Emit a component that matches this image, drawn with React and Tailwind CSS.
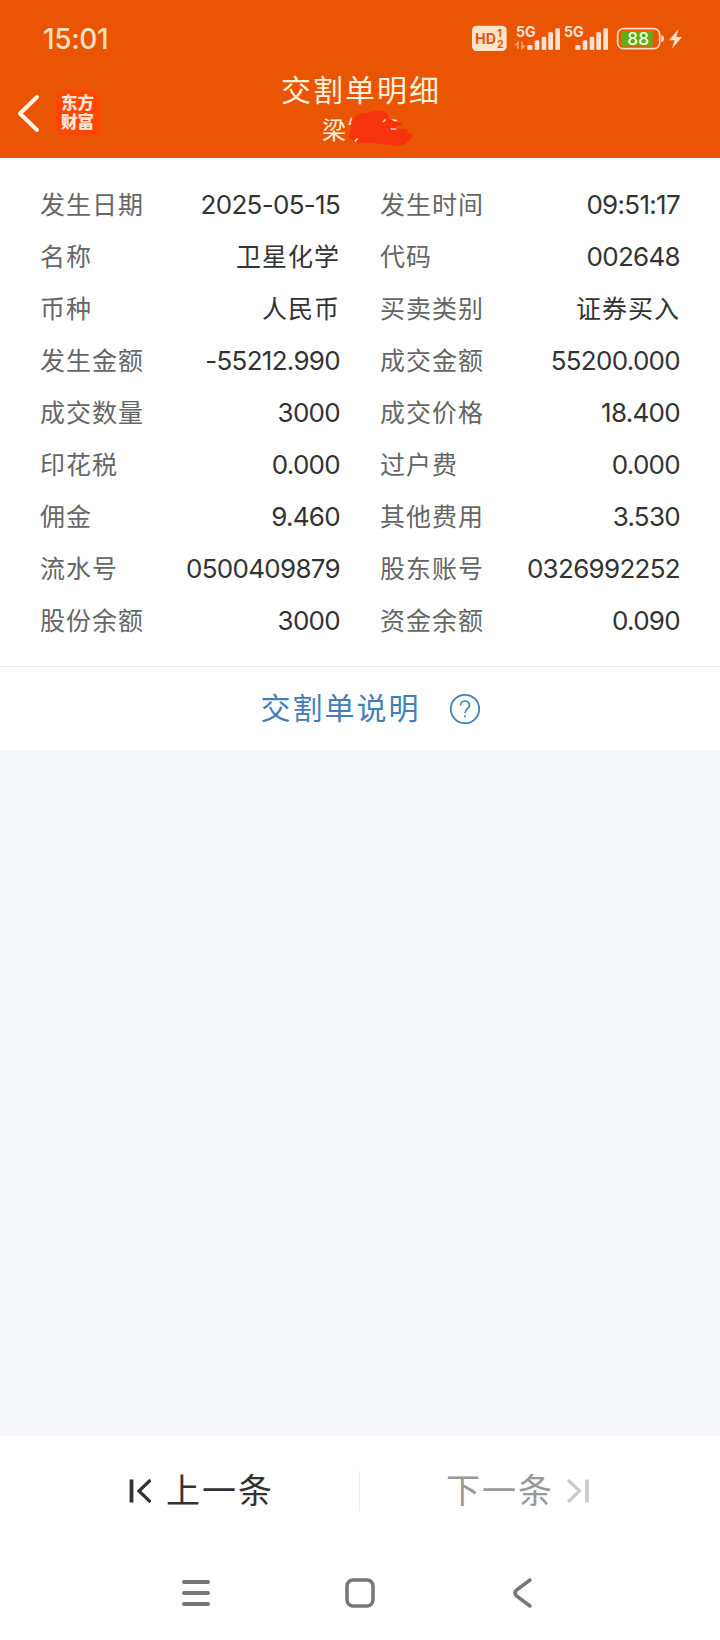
import React from "react";

const rows = [
  ["发生日期", "2025-05-15", "发生时间", "09:51:17"],
  ["名称", "卫星化学", "代码", "002648"],
  ["币种", "人民币", "买卖类别", "证券买入"],
  ["发生金额", "-55212.990", "成交金额", "55200.000"],
  ["成交数量", "3000", "成交价格", "18.400"],
  ["印花税", "0.000", "过户费", "0.000"],
  ["佣金", "9.460", "其他费用", "3.530"],
  ["流水号", "0500409879", "股东账号", "0326992252"],
  ["股份余额", "3000", "资金余额", "0.090"],
];

function StatusIcons() {
  return (
    <svg className="w-[240px] h-[60px]" viewBox="0 0 720 180" fill="#ffe3cc">
      <rect x="36" y="47" width="104" height="76" rx="14" />
      <g fill="#e95504" fontFamily="Inter, sans-serif" fontWeight="700">
        <text x="45" y="101" fontSize="43" textLength="63" lengthAdjust="spacingAndGlyphs">HD</text>
        <text x="112" y="82" fontSize="32">1</text>
        <text x="111" y="114" fontSize="32">2</text>
      </g>
      <g fontFamily="Inter, sans-serif" fontWeight="700" fontSize="44">
        <text x="168" y="82" textLength="59" lengthAdjust="spacingAndGlyphs">5G</text>
        <text x="312" y="82" textLength="59" lengthAdjust="spacingAndGlyphs">5G</text>
      </g>
      <path d="M174 116V97l-8 9M186 95v20l8-9" fill="none" stroke="#f7a470" strokeWidth="5" />
      {[202, 346].map((x) => (
        <g key={x}>
          <rect x={x} y="105" width="15" height="15" rx="4" />
          <rect x={x + 22} y="91" width="14" height="29" rx="4" />
          <rect x={x + 43} y="80" width="14" height="40" rx="4" />
          <rect x={x + 63} y="67" width="14" height="53" rx="4" />
          <rect x={x + 84} y="55" width="14" height="65" rx="4" />
        </g>
      ))}
      <rect x="473" y="56" width="126" height="60" rx="17" fill="none" stroke="#ffdcc0" strokeWidth="5" />
      <path d="M490 63h88v46h-88q-7 0-7-7V70q0-7 7-7z" fill="#5fae16" />
      <path d="M604 76q8 1 8 10t-8 10z" />
      <text x="502" y="105" fontSize="52" fontFamily="Inter, sans-serif" fontWeight="500" fill="#f8ffe0" textLength="65" lengthAdjust="spacingAndGlyphs">88</text>
      <path d="M656 57l-29 34h17l-9 26 31-36h-17z" />
    </svg>
  );
}

function Scribble() {
  return (
    <svg className="absolute left-[67px] top-[38px] w-[70px] h-[42px]" viewBox="262 144 210 126">
      <path d="M275 175l-4 12M268 193l6-2M398 180l12 2" fill="none" stroke="#ffe3cc" strokeWidth="5" strokeLinecap="round" />
      <path d="M290 167Q303 158 318 160Q351 148 374 155Q390 162 387 176Q400 179 404 185L424 187Q431 191 425 197L400 202Q410 207 420 206L442 208Q449 213 440 218L451 220Q463 225 454 233L449 234Q455 241 445 245L440 247Q443 254 430 255Q405 261 392 254Q360 253 342 249L305 249Q290 249 279 240Q265 232 268 222L276 205Q270 199 277 186Q280 172 290 167Z" fill="#f7330d" />
      <path d="M371 185l5-5M395 207h13M287 243l6-7" stroke="#ffd0b5" strokeWidth="5" strokeLinecap="round" />
    </svg>
  );
}

function Cell({ label, value }) {
  const isNumber = /^[-\d]/.test(value);
  return (
    <div className="flex items-center justify-between">
      <span className="pt-[3px] text-[25px] tracking-[1px] text-[#666666]">{label}</span>
      {isNumber ? (
        <span className="text-[26px] tracking-[-0.7px] text-[#333333]">{value}</span>
      ) : (
        <span className="pt-[3px] text-[25px] tracking-[1px] text-[#333333]">{value}</span>
      )}
    </div>
  );
}

export default function App() {
  return (
    <div className="w-[720px] h-[1640px] flex flex-col bg-white overflow-hidden font-[Inter,'Noto_Sans_CJK_SC',sans-serif] whitespace-nowrap">
      <header className="h-[158px] bg-[#ea5504] text-[#fff0dc] shrink-0">
        <div className="h-[70px] flex justify-between pl-[43px] pr-[20px] pt-[10px]">
          <span className="text-[28px] leading-[59px] font-medium tracking-[-0.4px] text-[#ffe0bd]">15:01</span>
          <StatusIcons />
        </div>
        <div className="h-[88px] grid grid-cols-[1fr_160px_1fr]">
          <div className="flex items-center pl-[16px] pb-[3px]">
            <svg className="w-[26px] h-[40px]" viewBox="0 0 26 40" fill="none" stroke="#fff5e4" strokeWidth="4" strokeLinecap="round" strokeLinejoin="round">
              <path d="M21 4L4 20.500L21 37" />
            </svg>
            <div className="ml-[13px] w-[45px] h-[46px] rounded-[9px] bg-[#ff4600] flex flex-col items-center justify-center text-[16.5px] leading-[19px] font-black text-[#ffe6d8]">
              <span>东方</span>
              <span>财富</span>
            </div>
          </div>
          <div className="relative flex flex-col items-center">
            <h1 className="pl-[2px] text-[30px] leading-[40px] tracking-[2px]">交割单明细</h1>
            <div className="w-full pl-[42px] text-[24px] leading-[42px]">梁</div>
            <Scribble />
          </div>
        </div>
      </header>

      <main className="pt-[20px] px-[40px] h-[509px] border-b border-[#ebebeb] shrink-0">
        {rows.map((row) => (
          <div key={row[0]} className="h-[52px] grid grid-cols-2 gap-[40px]">
            <Cell label={row[0]} value={row[1]} />
            <Cell label={row[2]} value={row[3]} />
          </div>
        ))}
      </main>

      <div className="h-[83px] flex items-center justify-center gap-[28px] pl-[21px] text-[#4480b8] shrink-0">
        <span className="text-[30px] tracking-[2px]">交割单说明</span>
        <svg className="w-[32px] h-[32px]" viewBox="0 0 32 32" fill="none" stroke="currentColor">
          <circle cx="16" cy="16" r="14.2" strokeWidth="1.8" />
          <path d="M11.500 12.500C11.500 6.500 20.500 6.500 20.500 12.300C20.500 15.500 16 16 16 20M16 22.300v2" strokeWidth="1.6" />
        </svg>
      </div>

      <div className="flex-1 bg-[#f6f8fb]" />

      <div className="h-[109px] grid grid-cols-[359px_1px_360px] items-center text-[34px] shrink-0">
        <div className="flex items-center gap-[15px] pl-[127px] text-[#333333]">
          <svg className="w-[24px] h-[26px]" viewBox="0 0 24 26" fill="none" stroke="currentColor">
            <path d="M4.500 1.500V24.500" strokeWidth="3.800" />
            <path d="M23.500 2L12 13L23.500 24" strokeWidth="3.200" />
          </svg>
          <span className="tracking-[2px]">上一条</span>
        </div>
        <div className="w-px h-[40px] bg-[#ebebeb]" />
        <div className="flex items-center gap-[12px] pl-[86px] text-[#999999]">
          <span className="tracking-[2px]">下一条</span>
          <svg className="w-[24px] h-[26px] text-[#cccccc]" viewBox="0 0 24 26" fill="none" stroke="currentColor">
            <path d="M21 1.500V24.500" strokeWidth="3.800" />
            <path d="M2 2L13.500 13L2 24" strokeWidth="3.200" />
          </svg>
        </div>
      </div>

      <nav className="h-[95px] grid grid-cols-[72px_163px_163px_163px] text-[#777777] shrink-0">
        <span />
        <svg className="mt-[27px] ml-[108px] w-[32px] h-[42px]" viewBox="0 0 32 42" fill="none" stroke="currentColor" strokeWidth="4" strokeLinecap="round">
          <path d="M4 10H28M4 21H28M4 32H28" />
        </svg>
        <svg className="mt-[27px] ml-[109px] w-[32px] h-[42px]" viewBox="0 0 32 42" fill="none" stroke="currentColor" strokeWidth="3.500">
          <rect x="3" y="8" width="26" height="26" rx="6" />
        </svg>
        <svg className="mt-[27px] ml-[110px] w-[32px] h-[42px]" viewBox="0 0 32 42" fill="none" stroke="currentColor" strokeWidth="3.500" strokeLinecap="round">
          <path d="M22 8L8.500 18Q5.500 21 8.500 24L22 34" />
        </svg>
      </nav>
    </div>
  );
}
